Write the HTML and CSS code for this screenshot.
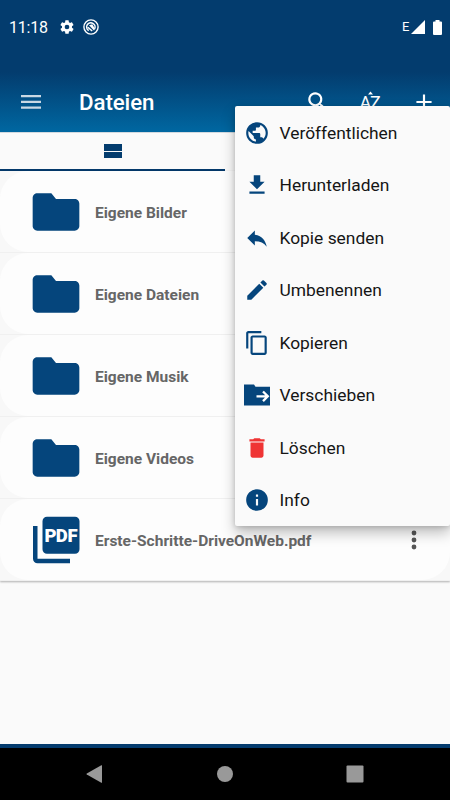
FILE: index.html
```html
<!DOCTYPE html>
<html lang="de">
<head>
<meta charset="utf-8">
<title>Dateien</title>
<link rel="stylesheet" href="styles.css">
</head>
<body>
<svg class="defs" width="0" height="0">
  <symbol id="folder" viewBox="0 0 24 24"><path d="M10 4H4c-1.1 0-2 .9-2 2v12c0 1.1.9 2 2 2h16c1.1 0 2-.9 2-2V8.400c0-1.1-.9-2-2-2h-8z"/></symbol>
</svg>
<div class="app">
  <header class="header">
    <div class="status">
      <span class="clock">11:18</span>
      <svg class="gear" viewBox="0 0 24 24"><path d="M19.4 13c.04-.3.1-.65.1-1s-.05-.7-.1-1l2.1-1.65c.2-.15.25-.4.12-.64l-2-3.46c-.12-.22-.38-.3-.6-.22l-2.5 1c-.52-.4-1.08-.73-1.7-.98l-.37-2.65A.5.5 0 0 0 14 2h-4a.5.5 0 0 0-.5.42l-.37 2.65c-.6.25-1.17.59-1.69.98l-2.49-1c-.23-.09-.49 0-.61.22l-2 3.46c-.13.22-.07.49.12.64L4.57 11c-.04.3-.07.65-.07 1s.03.7.07 1l-2.11 1.65c-.19.15-.24.42-.12.64l2 3.46c.12.22.38.31.61.22l2.49-1c.52.4 1.08.73 1.69.98l.37 2.65c.04.24.25.42.5.42h4c.25 0 .46-.18.5-.42l.37-2.65c.6-.25 1.17-.58 1.69-.98l2.49 1c.23.09.49 0 .61-.22l2-3.46c.12-.22.07-.49-.12-.64zM12 15.5a3.5 3.5 0 1 1 0-7 3.5 3.5 0 0 1 0 7z"/></svg>
      <svg class="pocket" viewBox="0 0 16 16"><circle cx="8" cy="8" r="7.100" fill="none" stroke="#fff" stroke-width="1.4"/><path d="M5.700 11.600A4.200 4.200 0 1 1 11.600 9.900M4.800 8.200 9.200 12" fill="none" stroke="#fff" stroke-width="1.5"/><path d="M6 6.200 9.300 5.200 12 10 11 11.500z"/></svg>
      <span class="net">E</span>
      <svg class="signal" viewBox="0 0 14 14"><path d="M14 0v14H0z"/></svg>
      <svg class="battery" viewBox="0 0 9 15"><path d="M2.500 0h4v1.500H8q1 0 1 1V14q0 1-1 1H1q-1 0-1-1V2.500q0-1 1-1h1.500z"/></svg>
    </div>
    <div class="toolbar">
      <svg class="burger" viewBox="0 0 20 14"><path d="M0 0h20v2.200H0zM0 5.800h20V8H0zM0 11.600h20v2.200H0z"/></svg>
      <h1>Dateien</h1>
      <svg class="act search" viewBox="0 0 24 24"><path d="M15.500 14h-.79l-.28-.27A6.500 6.500 0 1 0 13.730 14.430l.27.28v.79l5 4.990L20.490 19zM9.500 14a4.500 4.500 0 1 1 0-9 4.500 4.500 0 0 1 0 9z"/></svg>
      <svg class="act sort" viewBox="0 0 26 26"><path d="M11 5.400h5L13.500 2.600z"/><text class="az" x="2.400" y="20">A</text><text class="az" x="13" y="20">Z</text></svg>
      <svg class="act" viewBox="0 0 24 24"><path d="M19 13h-6v6h-2v-6H5v-2h6V5h2v6h6z"/></svg>
    </div>
  </header>
  <div class="tabs"><div class="tab"><i class="bar"></i><i class="bar"></i></div><div class="tab-off"></div></div>
  <main class="list">
    <div class="row"><div class="card"><svg class="file"><use href="#folder"/></svg><span>Eigene Bilder</span></div></div>
    <div class="row"><div class="card"><svg class="file"><use href="#folder"/></svg><span>Eigene Dateien</span></div></div>
    <div class="row"><div class="card"><svg class="file"><use href="#folder"/></svg><span>Eigene Musik</span></div></div>
    <div class="row"><div class="card"><svg class="file"><use href="#folder"/></svg><span>Eigene Videos</span></div></div>
    <div class="row"><div class="card">
      <svg class="file" viewBox="0 0 56 56"><path d="M19 4.700h28a4.500 4.500 0 0 1 4.500 4.500v28a4.500 4.500 0 0 1-4.500 4.500H19a4.500 4.500 0 0 1-4.500-4.500v-28A4.500 4.500 0 0 1 19 4.700zM5 14h4.500v32.700H42v4.600H9.500A4.500 4.500 0 0 1 5 46.800z"/><g class="pdf"><text x="16.500" y="30">P</text><text x="27.700" y="30">D</text><text x="39.500" y="30">F</text></g></svg>
      <span>Erste-Schritte-DriveOnWeb.pdf</span>
      <svg class="more" viewBox="0 0 6 20"><circle cx="3" cy="3" r="2.400"/><circle cx="3" cy="10" r="2.400"/><circle cx="3" cy="17" r="2.400"/></svg>
    </div></div>
  </main>
  <nav class="nav">
    <svg viewBox="0 0 18 18"><path d="M16 .5v17Q16 18 15.300 17.800L.8 9.600Q0 9 .8 8.400L15.300.2Q16 0 16 .5z"/></svg>
    <svg viewBox="0 0 18 18"><circle cx="9" cy="9" r="8"/></svg>
    <svg viewBox="0 0 18 18"><rect x=".5" y=".5" width="17" height="17" rx="1"/></svg>
  </nav>
  <div class="menu">
    <div class="item"><svg viewBox="0 0 24 24"><path d="M12 2a10 10 0 1 0 0 20 10 10 0 0 0 0-20zm-1 17.930c-3.950-.49-7-3.850-7-7.930 0-.62.080-1.210.210-1.790L9 15v1c0 1.100.9 2 2 2zm6.900-2.540c-.26-.81-1-1.390-1.900-1.390h-1v-3c0-.55-.45-1-1-1H8v-2h2c.55 0 1-.45 1-1V7h2c1.100 0 2-.9 2-2v-.41c2.930 1.190 5 4.060 5 7.410 0 2.080-.8 3.970-2.100 5.390z"/></svg>Veröffentlichen</div>
    <div class="item"><svg viewBox="0 0 24 24"><path d="M19 9h-4V3H9v6H5l7 7zM5 18v2h14v-2z"/></svg>Herunterladen</div>
    <div class="item"><svg viewBox="0 0 24 24"><path d="M10 9V5l-7 7 7 7v-4.100c5 0 8.500 1.600 11 5.100-1-5-4-10-11-11z"/></svg>Kopie senden</div>
    <div class="item"><svg viewBox="0 0 24 24"><path d="M3 17.250V21h3.750L17.810 9.940l-3.750-3.750zM20.710 7.040a1 1 0 0 0 0-1.410l-2.340-2.340a1 1 0 0 0-1.410 0l-1.830 1.830 3.750 3.750z"/></svg>Umbenennen</div>
    <div class="item"><svg viewBox="0 0 24 24"><path d="M16 1H4c-1.100 0-2 .9-2 2v14h2V3h12zm3 4H8c-1.100 0-2 .9-2 2v14c0 1.100.9 2 2 2h11c1.100 0 2-.9 2-2V7c0-1.100-.9-2-2-2zm0 16H8V7h11z"/></svg>Kopieren</div>
    <div class="item"><svg viewBox="0 0 26 26"><path d="M0 2.500h10l1.500 2.300H26V23.500H0z"/><path d="M12.500 14.300h11M19 9.500l4.800 4.800L19 19.100" fill="none" stroke="#fff" stroke-width="2.300"/></svg>Verschieben</div>
    <div class="item"><svg class="red" viewBox="0 0 24 24"><path d="M6 19c0 1.100.9 2 2 2h8c1.100 0 2-.9 2-2V7H6zM19 4h-3.500l-1-1h-5l-1 1H5v2h14z"/></svg>Löschen</div>
    <div class="item"><svg viewBox="0 0 24 24"><path d="M12 2a10 10 0 1 0 0 20 10 10 0 0 0 0-20zm1 15h-2v-6h2zm0-8h-2V7h2z"/></svg>Info</div>
  </div>
</div>
</body>
</html>
```
FILE: styles.css
```css
* { box-sizing: border-box; }
body { margin: 0; font-family: Roboto, sans-serif; }
.defs { position: absolute; }
svg { display: block; flex: none; }
.app { position: relative; width: 450px; height: 800px; background: #fafafa; display: flex; flex-direction: column; overflow: hidden; }
.header { height: 132px; flex: none; background: linear-gradient(#033c6e 0 72px, #0067a1 132px); color: #fff; fill: #fff; }
.status { height: 72px; padding: 0 8px 18px 9px; display: flex; align-items: center; }
.clock { width: 50px; font-size: 16px; letter-spacing: -.2px; }
.gear { width: 16px; height: 16px; }
.pocket { width: 16px; height: 16px; margin-left: 8px; }
.net { margin-left: auto; font-size: 13px; width: 9px; line-height: 16px; }
.signal { width: 14px; height: 14px; margin-right: 8px; }
.battery { width: 9px; height: 15px; }
.toolbar { height: 60px; padding: 0 13.500px 0 21px; display: flex; align-items: center; }
.burger { width: 20px; height: 14px; fill: #c9d8e4; }
h1 { margin: 0 auto 0 38px; font-size: 22.300px; font-weight: 500; line-height: 28px; letter-spacing: -.1px; }
.act { width: 26px; height: 26px; margin-left: 27.500px; margin-bottom: 1px; }
.search { margin-right: -1.500px; }
.az { font-size: 18px; }
.tabs { height: 39px; flex: none; display: flex; border-top: 1px solid #d2d9df; }
.tab { width: 225px; border-bottom: 2px solid #04396b; padding-top: 11px; display: flex; flex-direction: column; align-items: center; gap: 1px; }
.bar { width: 18px; height: 6.500px; background: #033c6e; }
.list { flex: none; background: #f8f8f8; box-shadow: 0 1px 2px rgba(0,0,0,.3); }
.row { height: 82px; border-bottom: 1px solid #f0f0f0; }
.card { height: 81px; display: flex; align-items: center; padding: 1px 33px 0 28px; background: #fdfdfd; border-radius: 28px; color: #666; font-size: 15.500px; font-weight: 700; }
.card span { padding-top: 1px; }
.file { width: 56px; height: 56px; margin-right: 11px; fill: #05457c; overflow: visible; }
.pdf { fill: #fff; font-size: 18.500px; font-weight: 900; }
.more { width: 6px; height: 20px; margin-left: auto; fill: #555; }
.nav { height: 56px; margin-top: auto; border-top: 4px solid #043b6e; background: #000; fill: #999; display: flex; justify-content: center; align-items: center; gap: 112px; }
.nav svg { width: 18px; height: 18px; }
.menu { position: absolute; left: 235px; top: 106px; width: 215px; height: 420px; background: #fafafa; border-radius: 2px; box-shadow: 0 7px 14px rgba(0,0,0,.25), 0 1px 5px rgba(0,0,0,.16); }
.item { height: 52.500px; padding: 1px 0 0 9px; display: flex; align-items: center; font-size: 17.400px; color: #151515; }
.item svg { width: 26px; height: 26px; margin-right: 9.500px; fill: #05457c; }
.item .red { fill: #ef3434; }
```
